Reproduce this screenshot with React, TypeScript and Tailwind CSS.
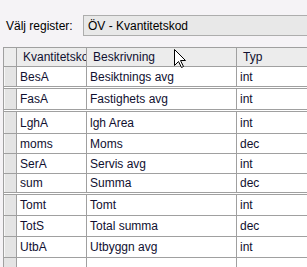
import React from "react";

type Row = { kod: string; besk: string; typ: string; h: string; dbl?: boolean };

const rows: Row[] = [
  { kod: "BesA", besk: "Besiktnings avg", typ: "int", h: "h-[19px]", dbl: true },
  { kod: "FasA", besk: "Fastighets avg", typ: "int", h: "h-[20px]", dbl: true },
  { kod: "LghA", besk: "lgh Area", typ: "int", h: "h-[21px]" },
  { kod: "moms", besk: "Moms", typ: "dec", h: "h-[19px]" },
  { kod: "SerA", besk: "Servis avg", typ: "int", h: "h-[19px]" },
  { kod: "sum", besk: "Summa", typ: "dec", h: "h-[18px]", dbl: true },
  { kod: "Tomt", besk: "Tomt", typ: "int", h: "h-[20px]" },
  { kod: "TotS", besk: "Total summa", typ: "dec", h: "h-[20px]" },
  { kod: "UtbA", besk: "Utbyggn avg", typ: "int", h: "h-[20px]" },
];

function Cursor() {
  return (
    <svg
      className="absolute left-[174px] top-[49px]"
      width="13"
      height="20"
      viewBox="0 0 13 20"
    >
      <path
        d="M0.5 0.5 L0.5 16.5 L4.5 12.5 L7.5 18.5 L9.5 17.5 L6.5 11.5 L11.5 11.5 Z"
        fill="#fff"
        stroke="#000"
        strokeWidth="1"
      />
    </svg>
  );
}

export default function App() {
  return (
    <div
      className="relative h-[267px] w-[307px] overflow-hidden bg-[#f5f3f6] text-[12px] text-[#101030]"
      style={{ fontFamily: '"Liberation Sans", Arial, sans-serif' }}
    >
      <div className="flex h-[47px] items-start pt-[15px]">
        <span className="ml-[6px] mt-[2px] w-[77px] shrink-0 text-black">Välj register:</span>
        <div className="flex h-[21px] flex-1 items-center border border-r-0 border-[#adadad] bg-[#e8e8e8] pl-[4px] text-black">
          ÖV - Kvantitetskod
        </div>
      </div>

      <div className="ml-[3px] w-[330px] border-l border-t border-[#a0a0a0]">
        <div className="flex h-[19px] border-b border-[#a0a0a0] bg-[#ececec]">
          <div className="w-[13px] shrink-0 border-r border-[#a0a0a0]" />
          <div className="w-[70px] shrink-0 overflow-hidden whitespace-nowrap border-r border-[#a0a0a0] pl-[6px] leading-[18px]">
            Kvantitetskod
          </div>
          <div className="w-[150px] shrink-0 border-r border-[#a0a0a0] pl-[6px] leading-[18px]">
            Beskrivning
          </div>
          <div className="flex-1 pl-[6px] leading-[18px]">Typ</div>
        </div>
        {rows.map((r) => (
          <div
            key={r.kod}
            className={`flex ${r.h} box-content bg-white ${
              r.dbl ? "border-b-[3px] border-double" : "border-b"
            } border-[#a0a0a0]`}
          >
            <div className="w-[13px] shrink-0 border-r border-[#a0a0a0] bg-[#e4e4e4] shadow-[inset_1px_0_0_#f7f7f7]" />
            <div className="flex w-[70px] shrink-0 items-center border-r border-[#a0a0a0] pl-[3px]">
              {r.kod}
            </div>
            <div className="flex w-[150px] shrink-0 items-center border-r border-[#a0a0a0] pl-[3px]">
              {r.besk}
            </div>
            <div className="flex flex-1 items-center pl-[3px]">{r.typ}</div>
          </div>
        ))}
        <div className="flex h-[20px] bg-white">
          <div className="w-[13px] shrink-0 border-r border-[#a0a0a0] bg-[#e4e4e4]" />
          <div className="w-[70px] shrink-0 border-r border-[#a0a0a0]" />
          <div className="w-[150px] shrink-0 border-r border-[#a0a0a0]" />
          <div className="flex-1" />
        </div>
      </div>
      <Cursor />
    </div>
  );
}
